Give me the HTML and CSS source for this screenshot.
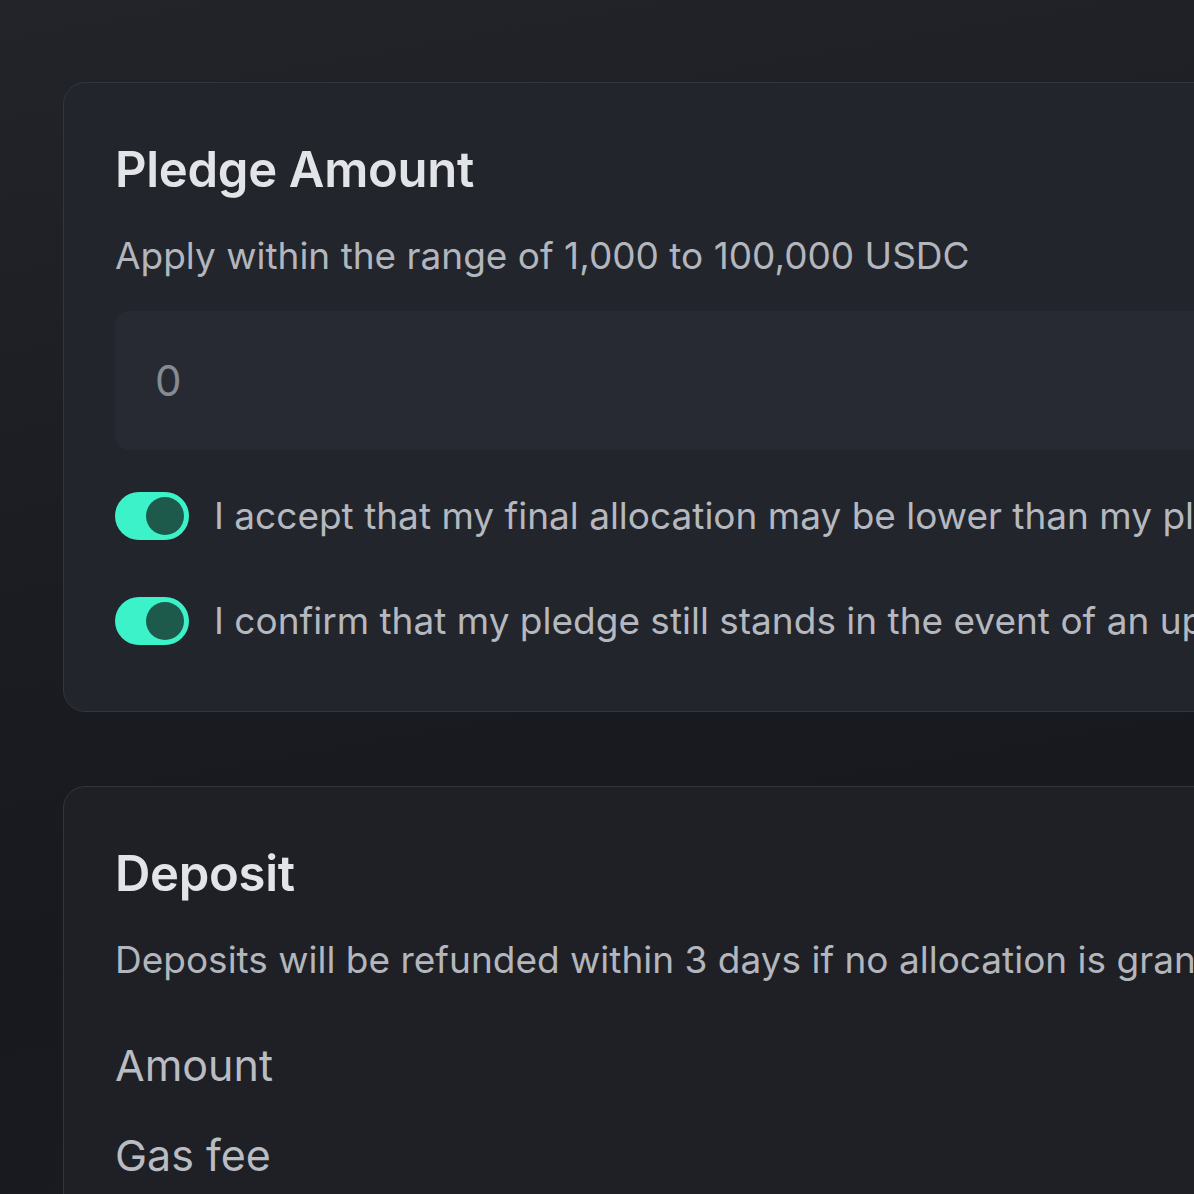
FILE: index.html
```html
<!DOCTYPE html>
<html lang="en">
<head>
<meta charset="utf-8">
<title>Pledge</title>
<link rel="stylesheet" href="styles.css">
</head>
<body>
<main class="page">
  <section class="card">
    <h2 class="card-title">Pledge Amount</h2>
    <p class="card-desc">Apply within the range of 1,000 to 100,000 USDC</p>
    <div class="amount-input"><span class="placeholder">0</span></div>
    <label class="check-row">
      <span class="toggle"><span class="knob"></span></span>
      <span class="check-text">I accept that my final allocation may be lower than my pledged amount</span>
    </label>
    <label class="check-row">
      <span class="toggle"><span class="knob"></span></span>
      <span class="check-text">I confirm that my pledge still stands in the event of an upsized round</span>
    </label>
  </section>
  <section class="card card-deposit">
    <h2 class="card-title">Deposit</h2>
    <p class="card-desc">Deposits will be refunded within 3 days if no allocation is granted</p>
    <div class="row-label">Amount</div>
    <div class="row-label">Gas fee</div>
  </section>
</main>
</body>
</html>
```

FILE: styles.css
```css
html, body {
  margin: 0;
  padding: 0;
  height: 100%;
}
body {
  overflow: hidden;
  background: linear-gradient(170deg, #22242a 0%, #1a1c21 45%, #17191e 70%, #1a1c21 100%);
  font-family: Inter, "Noto Sans", sans-serif;
  color: #e4e5e8;
}
.page {
  padding: 82px 0 0 63px;
  display: flex;
  flex-direction: column;
  gap: 74px;
  width: 1500px;
}
.card {
  box-sizing: border-box;
  width: 1400px;
  background: #22252c;
  border: 1.5px solid #32353d;
  border-radius: 22px;
  padding: 52px 52px 66px 51px;
}
.card-deposit {
  background: #1e2026;
  padding-top: 52px;
  padding-bottom: 60px;
}
.card-title {
  margin: 0;
  font-size: 49px;
  font-weight: 600;
  line-height: 70px;
  color: #e3e4e7;
  letter-spacing: -0.3px;
}
.card-desc {
  margin: 26px 0 0;
  font-size: 37px;
  line-height: 50px;
  color: #b3b6bc;
}
.amount-input {
  margin-top: 30px;
  height: 139px;
  background: #272a32;
  border-radius: 14px;
  display: flex;
  align-items: center;
  padding-left: 40px;
}
.placeholder {
  font-size: 42px;
  color: #868a91;
}
.check-row {
  display: flex;
  align-items: center;
  gap: 25px;
  margin-top: 42px;
  white-space: nowrap;
}
.check-row + .check-row {
  margin-top: 57px;
}
.toggle {
  flex: none;
  box-sizing: border-box;
  width: 74px;
  height: 48px;
  border-radius: 24px;
  background: #3cf2c9;
  display: flex;
  align-items: center;
  justify-content: flex-end;
  padding-right: 5px;
}
.knob {
  width: 38px;
  height: 38px;
  border-radius: 50%;
  background: #1e5a4b;
}
.check-text {
  font-size: 37px;
  line-height: 48px;
  color: #b5b8be;
}
.row-label {
  font-size: 43px;
  line-height: 50px;
  color: #b9bcc2;
  margin-top: 55px;
}
.row-label + .row-label {
  margin-top: 40px;
}
```
